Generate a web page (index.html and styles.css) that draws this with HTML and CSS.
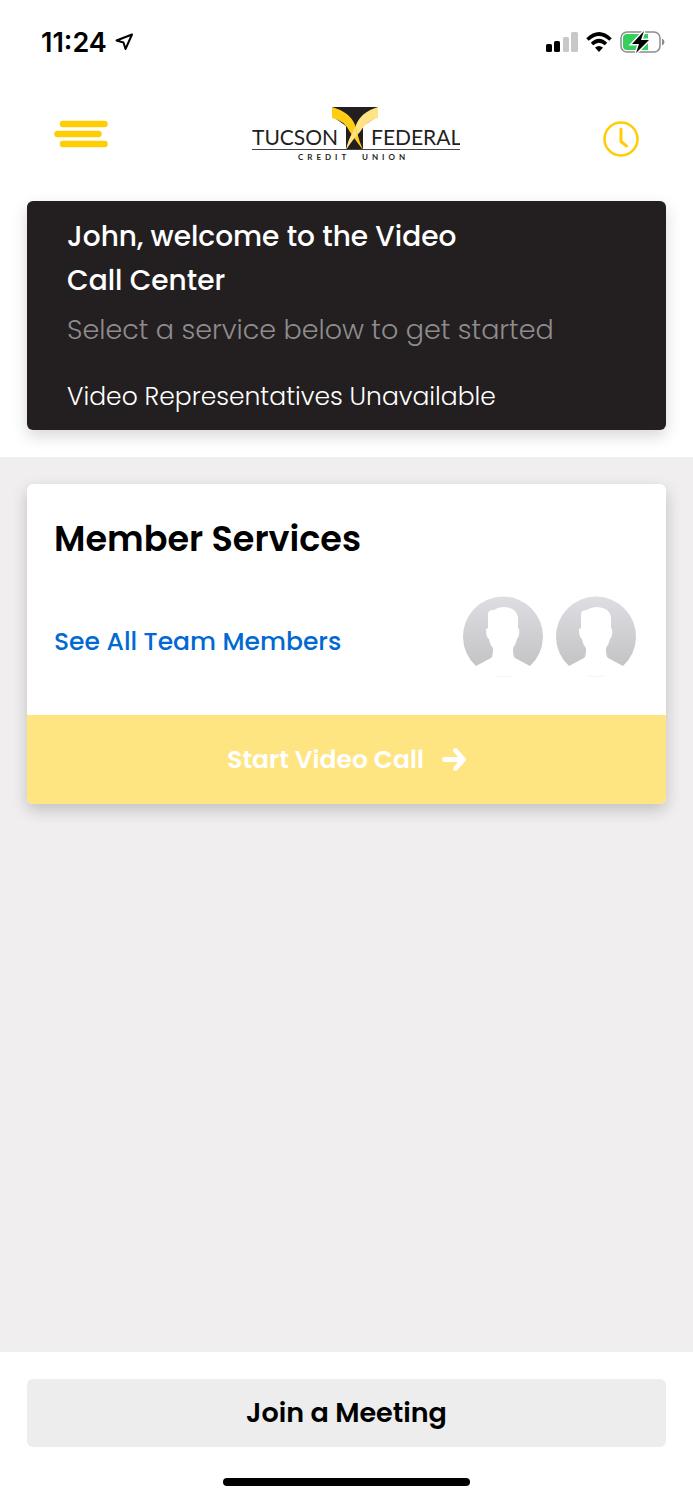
FILE: index.html
```html
<!DOCTYPE html>
<html lang="en">
<head>
  <meta charset="utf-8">
  <meta name="viewport" content="width=device-width, initial-scale=1">
  <title>Video Call Center</title>
  <link rel="stylesheet" href="styles.css">
</head>
<body>
  <div class="status-bar">
    <div class="status-group">
      <span class="status-time">11:24</span>
      <svg width="20" height="20" viewBox="0 0 20 20" aria-hidden="true"><path d="M17 2.500 1.500 8.500l7 2 2 6.500z" fill="none" stroke="#000" stroke-width="2" stroke-linejoin="round"/></svg>
    </div>
    <div class="status-group">
      <svg width="32" height="20" viewBox="0 0 32 20" aria-hidden="true">
        <rect x="0" y="12" width="6" height="8" rx="1.500"/><rect x="8" y="9" width="6" height="11" rx="1.500"/>
        <rect x="17" y="5" width="6" height="15" rx="1.500" fill="#c8c8c8"/><rect x="25" y="0" width="7" height="20" rx="1.500" fill="#c8c8c8"/>
      </svg>
      <svg width="26" height="20" viewBox="0 0 26 20" aria-hidden="true">
        <path d="M1.500 7.500Q13-3.500 24.500 7.500M6 12Q13 5.500 20 12" fill="none" stroke="#000" stroke-width="3.600"/>
        <path d="M13 20 9 15.500Q13 12.500 17 15.500z"/>
      </svg>
      <svg width="45" height="24" viewBox="0 0 45 24" aria-hidden="true">
        <rect x="1" y="2" width="39" height="20" rx="6" fill="#fff" stroke="#8c8c8c" stroke-width="1.500"/>
        <path d="M7 4H28V20H7Q3 20 3 16V8Q3 4 7 4z" fill="#34cf5c"/>
        <path d="M42 8.500Q44.500 9.500 44.500 12T42 15.500z" fill="#8c8c8c"/>
        <path d="M24 1 12 14H19L16 23 29 10H21z" stroke="#fff" stroke-width="3" paint-order="stroke"/>
      </svg>
    </div>
  </div>

  <header class="app-header">
    <button class="icon-button" type="button" aria-label="Menu">
      <svg width="54" height="28" viewBox="0 0 54 28" aria-hidden="true"><path d="M9 4H50.500M3.500 14H44.500M9 24H50.500" stroke="#ffcd05" stroke-width="6.500" stroke-linecap="round"/></svg>
    </button>
    <svg class="logo" width="208" height="56" viewBox="0 0 208 56" role="img" aria-label="Tucson Federal Credit Union">
      <path d="M80 1H126V10L111 20V44H94V20L80 10z" fill="#231f20"/>
      <path d="M126 1Q109 6 104 19L101 26Q96 34 94 44Q101 33 108 26Q114 15 126 12z" fill="#ffe385"/>
      <path d="M80 1Q98 6 103 19L105 26Q107 35 111 44Q104 35 98 26Q92 14 80 12z" fill="#ffcd14"/>
      <path d="M103 21 98 32 94 44Q97 37 105 29z" fill="#ffe385"/>
      <text class="logo-name" x="0" y="39">TUCSON</text>
      <text class="logo-name" x="119" y="39">FEDERAL</text>
      <path d="M0 43.500H208" stroke="#444" stroke-width="1"/>
      <text class="logo-sub" x="46" y="54">CREDIT</text>
      <text class="logo-sub" x="110" y="54">UNION</text>
    </svg>
    <button class="icon-button icon-button-history" type="button" aria-label="Call history">
      <svg width="36" height="36" viewBox="0 0 36 36" fill="none" stroke="#ffcd05" stroke-linecap="round" stroke-linejoin="round" aria-hidden="true"><circle cx="18" cy="18" r="16.500" stroke-width="2.500"/><path d="M18 8V20.500L23.500 25" stroke-width="3"/></svg>
    </button>
  </header>

  <section class="welcome">
    <h1 class="welcome-title">John, welcome to the Video<br>Call Center</h1>
    <p class="welcome-hint">Select a service below to get started</p>
    <p class="welcome-status">Video Representatives Unavailable</p>
  </section>

  <main class="services">
    <article class="service-card">
      <h2 class="service-title">Member Services</h2>
      <div class="team">
        <a class="team-link" href="#team">See All Team Members</a>
        <div class="avatars">
          <svg class="avatar" viewBox="0 0 80 80" role="img" aria-label="Team member">
            <defs><linearGradient id="shade" x1="0" y1="0" x2="0" y2="1"><stop offset="0" stop-color="#dedde2"/><stop offset="1" stop-color="#c4c4c6"/></linearGradient></defs>
            <path d="M13 69A40 40 0 1 1 67 69L52 61Q50 60 50 51Q53 47 54 42Q57 39 56 32L55 31V20Q53 10 40 10Q35 10 31 13Q25 13 25 17V31L23 32Q23 40 26 42Q27 48 30 51Q30 60 28 61z" fill="url(#shade)"/>
            <path d="M32 79Q40 80.500 48 79" fill="none" stroke="#f5f5f5"/>
          </svg>
          <svg class="avatar" viewBox="0 0 80 80" role="img" aria-label="Team member">
            <path d="M13 69A40 40 0 1 1 67 69L52 61Q50 60 50 51Q53 47 54 42Q57 39 56 32L55 31V20Q53 10 40 10Q35 10 31 13Q25 13 25 17V31L23 32Q23 40 26 42Q27 48 30 51Q30 60 28 61z" fill="url(#shade)"/>
            <path d="M32 79Q40 80.500 48 79" fill="none" stroke="#f5f5f5"/>
          </svg>
        </div>
      </div>
      <button class="start-call" type="button">
        Start Video Call
        <svg width="24" height="24" viewBox="0 0 24 24" fill="none" stroke="#fff" stroke-width="4.800" stroke-linecap="round" stroke-linejoin="round" aria-hidden="true"><path d="M2.500 11.500H20M13.500 2.500 21.500 11.500 13.500 20.500"/></svg>
      </button>
    </article>
  </main>

  <footer class="footer">
    <button class="join" type="button">Join a Meeting</button>
    <div class="home-indicator"></div>
  </footer>
</body>
</html>
```
FILE: styles.css
```css
* {
  box-sizing: border-box;
}

body {
  display: flex;
  flex-direction: column;
  min-height: 100vh;
  margin: 0;
  background: #fff;
  color: #000;
  font-family: Poppins, Inter, "Liberation Sans", sans-serif;
}

h1,
h2,
p {
  margin: 0;
}

button {
  border: 0;
  font-family: inherit;
  cursor: pointer;
}

svg {
  display: block;
  flex: none;
}

.status-bar {
  display: flex;
  align-items: center;
  justify-content: space-between;
  height: 84px;
  padding: 0 28px 0 41px;
}

.status-group {
  display: flex;
  align-items: center;
  gap: 8px;
}

.status-time {
  font-family: Inter, sans-serif;
  font-size: 27px;
  font-weight: 600;
}

.app-header {
  display: flex;
  align-items: center;
  justify-content: space-between;
  height: 100px;
  padding: 0 54px;
}

.icon-button {
  padding: 0;
  background: none;
}

.icon-button-history {
  padding-top: 9px;
}

.logo-name {
  fill: #231f20;
  font-family: Lato, sans-serif;
  font-size: 21px;
}

.logo-sub {
  fill: #231f20;
  font-family: Lato, sans-serif;
  font-size: 8px;
  font-weight: 700;
  letter-spacing: 4px;
}

.welcome {
  margin: 17px 27px 27px;
  padding: 14px 40px 13px;
  border-radius: 6px;
  background: #231f20;
  box-shadow: 0 6px 16px rgba(0, 0, 0, 0.16);
  color: #fff;
}

.welcome-title {
  font-size: 28px;
  font-weight: 500;
  line-height: 44px;
}

.welcome-hint {
  margin-top: 5px;
  color: #8e8c8d;
  font-size: 27px;
  font-weight: 300;
  line-height: 44px;
}

.welcome-status {
  margin-top: 25px;
  font-size: 25px;
  font-weight: 300;
  line-height: 40px;
}

.services {
  flex: 1;
  padding: 27px;
  background: #f0eeef;
}

.service-card {
  overflow: hidden;
  border-radius: 6px;
  background: #fff;
  box-shadow: 0 6px 16px rgba(0, 0, 0, 0.2);
}

.service-title {
  padding: 28px 27px 0;
  font-size: 35px;
  font-weight: 600;
  line-height: 54px;
}

.team {
  display: flex;
  align-items: center;
  justify-content: space-between;
  padding: 31px 30px 38px 27px;
}

.team-link {
  padding-top: 9px;
  color: #0069d2;
  font-size: 25px;
  font-weight: 500;
  line-height: 40px;
  text-decoration: none;
}

.avatars {
  display: flex;
  gap: 13px;
}

.avatar {
  width: 80px;
  height: 80px;
  overflow: visible;
}

.start-call {
  display: flex;
  align-items: center;
  justify-content: center;
  gap: 18px;
  width: 100%;
  height: 89px;
  background: #ffe582;
  color: #fff;
  font-size: 25px;
  font-weight: 600;
}

.footer {
  display: flex;
  flex-direction: column;
  gap: 31px;
  padding: 27px 27px 14px;
}

.join {
  height: 68px;
  border-radius: 6px;
  background: #ededed;
  color: #000;
  font-size: 27px;
  font-weight: 600;
}

.home-indicator {
  align-self: center;
  width: 247px;
  height: 8px;
  border-radius: 4px;
  background: #000;
}
```
